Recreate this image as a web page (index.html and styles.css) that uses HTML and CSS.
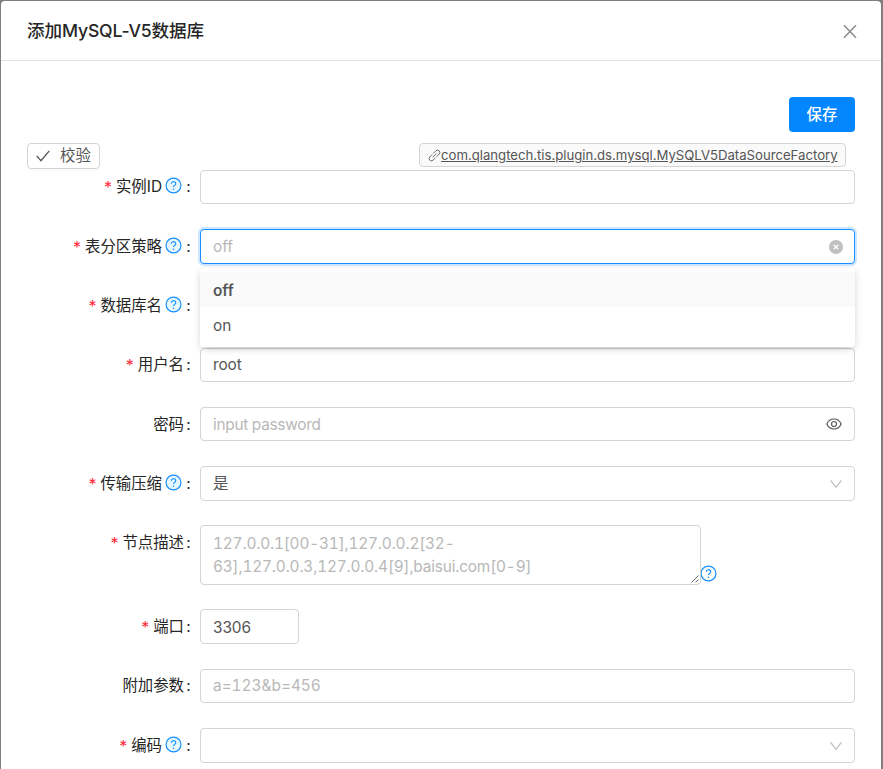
FILE: index.html
```html
<!DOCTYPE html>
<html lang="zh-CN">
<head>
<meta charset="utf-8">
<title>添加MySQL-V5数据库</title>
<link rel="stylesheet" href="styles.css">
</head>
<body>
<svg class="defs" width="0" height="0">
  <symbol id="help" viewBox="0 0 16 16">
    <circle class="disc" cx="8" cy="8" r="7"/>
    <path d="M5.9 6.3a2.1 1.9 0 1 1 3.1 1.7Q8 8.5 8 9.5" fill="none" stroke="#1890ff" stroke-width="1.15"/>
    <circle cx="8" cy="11.5" r=".75" fill="#1890ff"/>
  </symbol>
  <symbol id="down" viewBox="0 0 12 10"><path d="M.6 1.3 6 8.3l5.4-7" fill="none" stroke="#bfbfbf" stroke-width="1.3"/></symbol>
</svg>
<main class="modal">
  <header class="header">
    <h1 class="title">添加MySQL-V5数据库</h1>
    <svg class="close" viewBox="0 0 14 14"><path d="M1 .7l12 12.6M13 .7 1 13.3" stroke="#8c8c8c" stroke-width="1.5"/></svg>
  </header>
  <div class="actions"><div class="save">保存</div></div>
  <div class="toolbar">
    <div class="verify"><svg class="tick" viewBox="0 0 14 12"><path d="M.7 5.9 5 10.7 13.3.8" fill="none" stroke="#555" stroke-width="1.3"/></svg>校验</div>
    <div class="tag"><svg class="link" viewBox="0 0 12 12"><g fill="none" stroke="#666" stroke-width=".9"><path d="M5 4 7.300 1.700a2.100 2.100 0 0 1 3 3L8 7M7 8 4.700 10.300a2.100 2.100 0 0 1-3-3L4 5M4.300 7.700l3.400-3.400"/></g></svg><span class="plugin">com.qlangtech.tis.plugin.ds.mysql.MySQLV5DataSourceFactory</span></div>
  </div>
  <form class="form">
    <div class="row">
      <div class="label"><i>*</i>实例ID<svg class="help"><use href="#help"/></svg><b>:</b></div>
      <div class="field"></div>
    </div>
    <div class="row">
      <div class="label"><i>*</i>表分区策略<svg class="help"><use href="#help"/></svg><b>:</b></div>
      <div class="field tall focused"><span class="hint">off</span>
        <svg class="clear" viewBox="0 0 14 14"><circle cx="7" cy="7" r="7" fill="#bfbfbf"/><path d="M4.700 4.700l4.600 4.600M9.300 4.700 4.700 9.300" stroke="#fff" stroke-width="1.300"/></svg>
        <div class="menu"><div class="option active">off</div><div class="option">on</div></div>
      </div>
    </div>
    <div class="row loose">
      <div class="label"><i>*</i>数据库名<svg class="help"><use href="#help"/></svg><b>:</b></div>
      <div class="field"></div>
    </div>
    <div class="row">
      <div class="label high"><i>*</i>用户名<b>:</b></div>
      <div class="field"><span class="value root">root</span></div>
    </div>
    <div class="row">
      <div class="label">密码<b>:</b></div>
      <div class="field"><span class="hint pass">input password</span>
        <svg class="eye" viewBox="0 0 16 12"><path d="M.8 6C2.400 2.600 4.800 1 8 1s5.600 1.600 7.200 5C13.600 9.400 11.200 11 8 11S2.400 9.400.8 6z" fill="none" stroke="#595959" stroke-width="1.200"/><circle cx="8" cy="6" r="2.500" fill="none" stroke="#595959" stroke-width="1.200"/></svg>
      </div>
    </div>
    <div class="row">
      <div class="label"><i>*</i>传输压缩<svg class="help"><use href="#help"/></svg><b>:</b></div>
      <div class="field tall"><span class="value">是</span><svg class="down"><use href="#down"/></svg></div>
    </div>
    <div class="row area">
      <div class="label"><i>*</i>节点描述<b>:</b></div>
      <div class="field textarea"><span class="hint nodes">127.0.0.1[00-31],127.0.0.2[32-<br>63],127.0.0.3,127.0.0.4[9],baisui.com[0-9]</span>
        <svg class="grip" viewBox="0 0 8 8"><path d="M.5 7.500l7-7M4.500 7.500l3-3" stroke="#555" stroke-width=".9"/></svg>
      </div>
      <svg class="help plain"><use href="#help"/></svg>
    </div>
    <div class="row loose">
      <div class="label"><i>*</i>端口<b>:</b></div>
      <div class="field tall port"><span class="value digits">3306</span></div>
    </div>
    <div class="row">
      <div class="label high">附加参数<b>:</b></div>
      <div class="field"><span class="hint">a=123&amp;b=456</span></div>
    </div>
    <div class="row">
      <div class="label"><i>*</i>编码<svg class="help"><use href="#help"/></svg><b>:</b></div>
      <div class="field tall"><svg class="down"><use href="#down"/></svg></div>
    </div>
  </form>
</main>
</body>
</html>
```
FILE: styles.css
```css
* { box-sizing: border-box; }
body {
  margin: 0;
  height: 769px;
  padding: 1px 2px 0 1px;
  overflow: hidden;
  background: #7f7f7f;
  color: #262626;
  font: 15.4px/24px Inter, "Noto Sans CJK SC", sans-serif;
}
.defs { position: absolute; }
.modal {
  height: 768px;
  background: #fff;
  border-radius: 4px 4px 0 0;
  overflow: hidden;
}
.header {
  display: flex;
  align-items: center;
  justify-content: space-between;
  height: 60px;
  padding: 0 24px 0 26px;
  border-bottom: 1px solid #e2e2e2;
}
.title { margin: 0; font-size: 17.6px; font-weight: 500; letter-spacing: -.15px; }
.close { width: 14px; height: 15px; margin-top: 1px; }
.actions { display: flex; justify-content: flex-end; padding: 36px 26px 0 0; }
.save {
  width: 66px;
  height: 35px;
  border-radius: 4px;
  background: #0486ff;
  color: #fff;
  font-weight: 500;
  line-height: 35px;
  text-align: center;
}
.toolbar {
  display: flex;
  justify-content: space-between;
  height: 26px;
  margin: 11px 35px 0 26px;
}
.verify {
  display: flex;
  align-items: center;
  width: 73px;
  height: 26px;
  padding-left: 8px;
  border: 1px solid #d4d4d4;
  border-radius: 4px;
  box-shadow: 0 2px 0 rgba(0, 0, 0, .02);
  color: #555;
}
.tick { width: 14px; height: 12px; margin-right: 10px; }
.tag {
  display: flex;
  align-items: center;
  width: 427px;
  height: 24px;
  padding-left: 8px;
  border: 1px solid #d4d4d4;
  border-radius: 4px;
  background: #fafafa;
  color: #555;
  font-size: 13.2px;
}
.link { width: 13px; height: 13px; flex: none; }
.plugin { text-decoration: underline; white-space: nowrap; letter-spacing: -.02px; }
.row { display: flex; height: 59px; }
.loose { height: 60px; }
.area { height: 84px; }
.form { margin-top: 1px; }
.label {
  display: flex;
  align-items: center;
  justify-content: flex-end;
  width: 199px;
  height: 35px;
  padding-right: 9px;
  white-space: nowrap;
}
.row:first-child .label, .high { height: 33px; }
.label i { margin-right: 4px; color: #ff2a3c; font-size: 16px; font-style: normal; }
.label b { width: 6px; padding-left: 1px; margin-left: 1px; font-weight: 400; text-align: center; }
.help { width: 17px; height: 17px; margin: -2px 2px 0 3px; fill: #e6f7ff; }
.disc { stroke: #1890ff; stroke-width: 1.1; }
.plain { fill: #fff; align-self: flex-start; margin: 40px 0 0 -1px; }
.field {
  position: relative;
  display: flex;
  align-items: center;
  width: 655px;
  height: 34px;
  padding: 0 12px;
  border: 1px solid #d4d4d4;
  border-radius: 4px;
  background: #fff;
}
.tall { height: 35px; }
.hint { color: #b8b8b8; font-variant-numeric: tabular-nums; }
.value { color: #555; }
.root { letter-spacing: -.1px; }
.pass { margin-top: 2px; letter-spacing: -.28px; }
.digits { margin-top: 2px; letter-spacing: -.1px; }
.focused { border-color: #1890ff; box-shadow: 0 0 0 2px rgba(24, 144, 255, .22); }
.clear { width: 14px; height: 14px; margin-left: auto; margin-right: -1px; }
.eye { width: 16px; height: 12px; margin-left: auto; }
.down { width: 12px; height: 10px; margin-left: auto; }
.menu {
  position: absolute;
  z-index: 2;
  top: 38px;
  left: -1px;
  width: 655px;
  height: 79px;
  padding-top: 4px;
  border-radius: 4px;
  background: #fff;
  box-shadow: 0 3px 6px -4px rgba(0, 0, 0, .25), 0 2px 8px rgba(0, 0, 0, .13);
  color: #555;
}
.option { height: 35px; padding-left: 13px; line-height: 38px; }
.active { background: #fafafa; font-weight: 600; }
.textarea { width: 501px; height: 60px; line-height: 23px; }
.nodes { margin-top: -1px; letter-spacing: -.17px; }
.grip { position: absolute; right: 1px; bottom: 1px; width: 8px; height: 8px; }
.port { width: 99px; }
```
